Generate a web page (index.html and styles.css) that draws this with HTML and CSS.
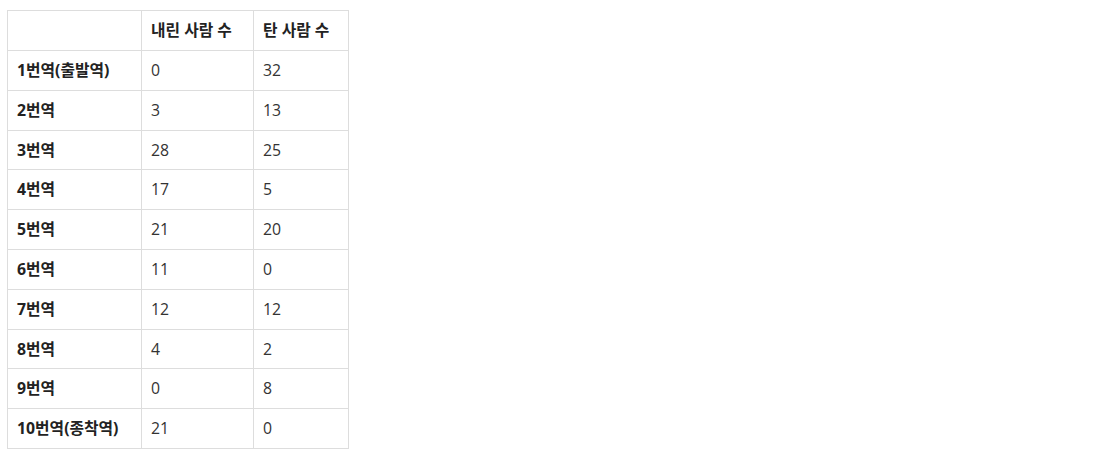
FILE: index.html
```html
<!DOCTYPE html>
<html lang="ko">
<head>
<meta charset="utf-8">
<link rel="stylesheet" href="styles.css">
</head>
<body>
<div class="wrap">
<table class="data">
  <colgroup>
    <col class="c1"><col class="c2"><col class="c3">
  </colgroup>
  <thead>
    <tr><th></th><th>내린 사람 수</th><th>탄 사람 수</th></tr>
  </thead>
  <tbody>
    <tr><th>1번역(출발역)</th><td>0</td><td>32</td></tr>
    <tr><th>2번역</th><td>3</td><td>13</td></tr>
    <tr><th>3번역</th><td>28</td><td>25</td></tr>
    <tr><th>4번역</th><td>17</td><td>5</td></tr>
    <tr><th>5번역</th><td>21</td><td>20</td></tr>
    <tr><th>6번역</th><td>11</td><td>0</td></tr>
    <tr><th>7번역</th><td>12</td><td>12</td></tr>
    <tr><th>8번역</th><td>4</td><td>2</td></tr>
    <tr><th>9번역</th><td>0</td><td>8</td></tr>
    <tr><th>10번역(종착역)</th><td>21</td><td>0</td></tr>
  </tbody>
</table>
</div>
</body>
</html>
```
FILE: styles.css
```css
html, body {
  margin: 0;
  padding: 0;
  background: #fff;
}
.wrap {
  padding: 10px 0 0 7px;
}
.data {
  border-collapse: collapse;
  table-layout: fixed;
  width: 341px;
  font-family: "Open Sans", "Noto Sans CJK KR", sans-serif;
  font-size: 15.8px;
  color: #333;
}
.c1 { width: 134px; }
.c2 { width: 112px; }
.c3 { width: 95px; }
.data th,
.data td {
  border: 1px solid #ddd;
  padding: 8px 8px 8px 9px;
  line-height: 22.8px;
  height: 22.8px;
  text-align: left;
  vertical-align: middle;
  white-space: nowrap;
}
.data th {
  font-weight: 700;
  color: #222;
}
.data td {
  font-weight: 400;
}
.data thead th {
  height: 23px;
}
```
